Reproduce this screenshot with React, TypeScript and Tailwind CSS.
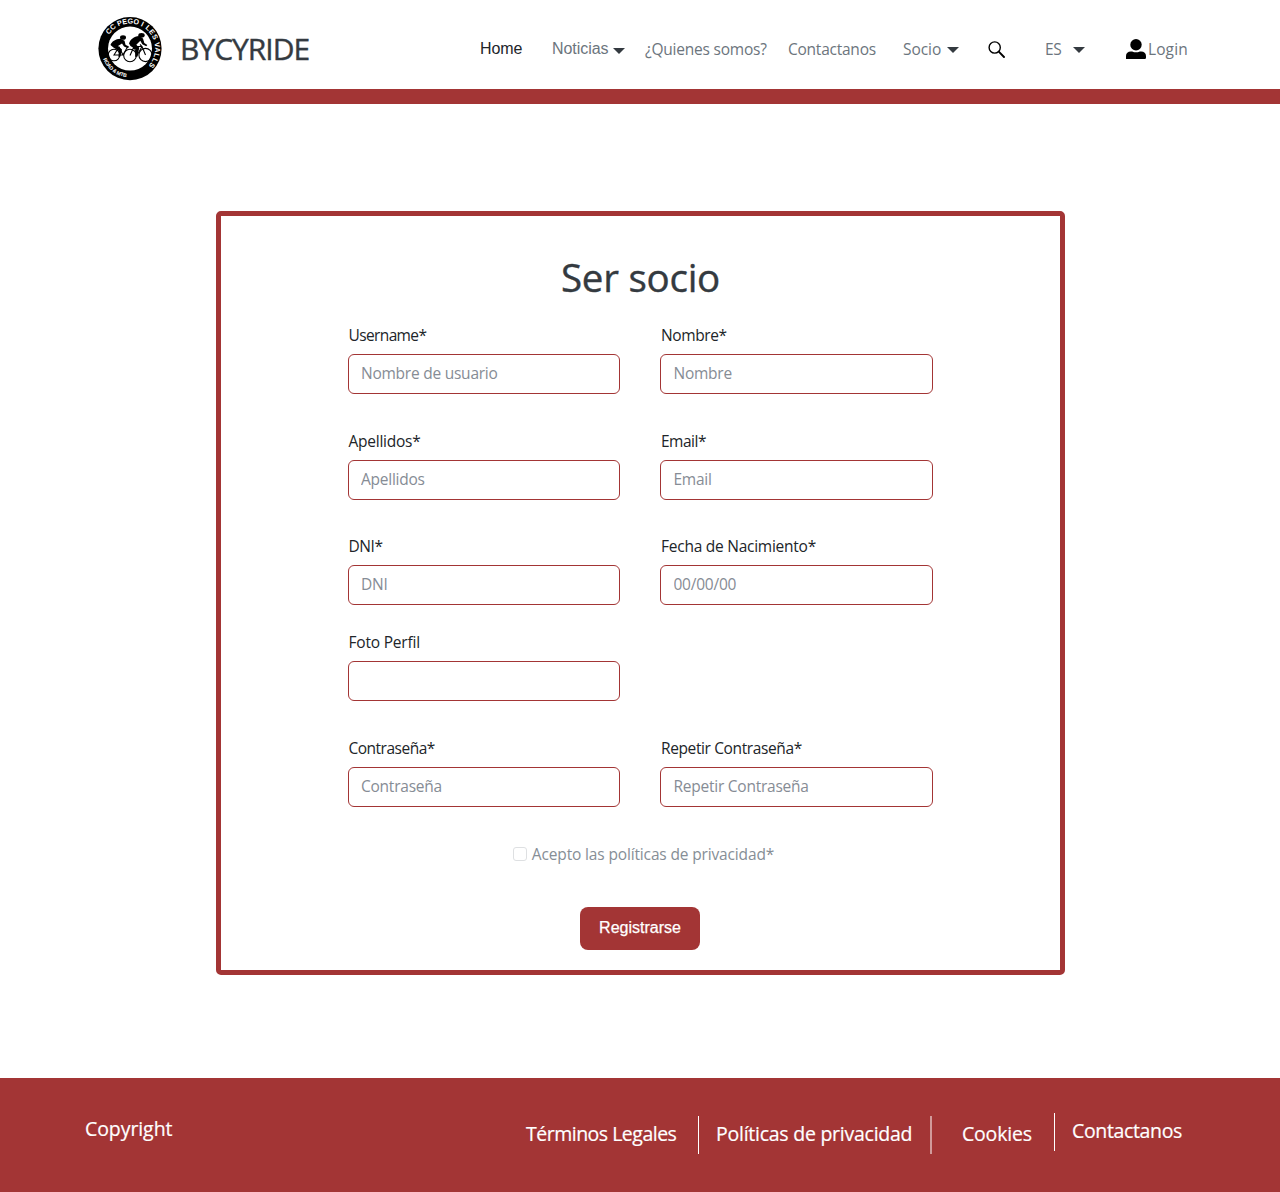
import type { ReactNode } from "react";

function Logo() {
  return (
    <svg className="h-16 w-16 shrink-0" viewBox="0 0 64 64" fill="none">
      <defs>
        <path id="ringTop" d="M 6.9 31.6 A 25.1 25.1 0 1 1 32 56.7" />
        <path id="ringBottom" d="M 3.2 31.6 A 28.8 28.8 0 0 0 60.8 31.6" />
      </defs>
      <circle cx="32" cy="31.6" r="31.6" fill="#000" />
      <circle cx="32" cy="31.6" r="22" fill="#fff" />
      <g fill="#fff" fontFamily="Liberation Sans" fontWeight="bold">
        <text fontSize="7.2">
          <textPath href="#ringTop" startOffset="14.5" textLength="37.5">CC PEGO I</textPath>
        </text>
        <text fontSize="7.2">
          <textPath href="#ringTop" startOffset="55" textLength="42">LES VALLS</textPath>
        </text>
        <text fontSize="5.2">
          <textPath href="#ringBottom" startOffset="10.5" textLength="31">ROAD &amp; MTB</textPath>
        </text>
      </g>
      <g stroke="#000" strokeWidth="1.1">
        <circle cx="16" cy="38" r="5.8" />
        <circle cx="32" cy="38.5" r="6.3" />
        <circle cx="47.5" cy="38" r="6.6" />
        <path d="M16 38l5-8 4 8zM32 38.5l4-9h8l3.5 8.5M36 29.5l3 9 5-9-2-2M25 38l5-9" />
      </g>
      <g fill="#000">
        <ellipse cx="25" cy="20.5" rx="3" ry="2.3" />
        <ellipse cx="43.5" cy="18.3" rx="3.2" ry="2.4" />
        <path d="M12.5 28c1-3.5 5-6 10-6.3l4 2 1 4 3.5 2-1 1.5-4-1.6-2-3-4 2.5 4 3.5-1.6 7-2 .4.5-6-5.5-3.5z" />
        <path d="M31 26.5c1-3.8 5-7.3 10-7.6l4 2.5 1.3 4.5 3 2-1 1.4-4-2-2-3.5-4 4 3 3-2 9h-2.2l.4-7.5-5-3.4z" />
      </g>
    </svg>
  );
}

function Caret() {
  return (
    <svg className="h-1.5 w-3 shrink-0" viewBox="0 0 12 6">
      <path d="M0 0h12L6 6z" fill="#343a40" />
    </svg>
  );
}

function NavLink({ className, children }: { className: string; children: ReactNode }) {
  return (
    <a href="#" className={`shrink-0 whitespace-nowrap leading-6 ${className}`}>
      {children}
    </a>
  );
}

function Header() {
  return (
    <header className="flex h-[104px] items-start border-b-[15px] border-[#a33535] bg-white pl-[98px]">
      <div className="flex h-[97px] w-[381px] shrink-0 items-center">
        <Logo />
        <span className="ml-[18px] text-[30px] leading-none tracking-[-1px] text-[#343a40] [-webkit-text-stroke:0.4px_#343a40]">
          BYCYRIDE
        </span>
      </div>
      <nav className="flex h-[98px] items-center text-[15.5px] text-[#6c757d]">
        <NavLink className="w-[72px] pl-px font-['Liberation_Sans',sans-serif] text-base tracking-[-0.1px] text-[#212529]">Home</NavLink>
        <NavLink className="w-[62px] pl-px font-['Liberation_Sans',sans-serif] text-base tracking-[-0.05px]">Noticias</NavLink>
        <div className="mt-1"><Caret /></div>
        <NavLink className="ml-5 w-[143px] tracking-[-0.22px]">¿Quienes somos?</NavLink>
        <NavLink className="w-[115px] tracking-[-0.24px]">Contactanos</NavLink>
        <NavLink className="w-11 tracking-[-0.05px]">Socio</NavLink>
        <div className="mt-0.5"><Caret /></div>
        <svg className="ml-[29px] h-[17px] w-[17px] shrink-0" viewBox="0 0 17 17" fill="none" stroke="#000">
          <circle cx="6.7" cy="6.5" r="5.6" strokeWidth="1.4" />
          <path d="M10.8 10.7L16 16" strokeWidth="1.9" strokeLinecap="round" />
        </svg>
        <NavLink className="ml-10 w-7 tracking-[-0.4px]">ES</NavLink>
        <div className="mt-0.5"><Caret /></div>
        <svg className="ml-[41px] h-5 w-5 shrink-0" viewBox="0 0 20 20" fill="#000">
          <circle cx="10" cy="5.7" r="5.7" />
          <path d="M0 20v-3c0-3 2-4.6 4.8-4.6h1.4a9 9 0 0 0 7.6 0h1.4c2.8 0 4.8 1.6 4.8 4.6v1.4c0 1-.7 1.6-1.6 1.6z" />
        </svg>
        <NavLink className="ml-0.5 tracking-[0.1px]">Login</NavLink>
      </nav>
    </header>
  );
}

function Field({ label, placeholder = "", type = "text", className = "", labelClass = "tracking-[-0.25px]" }: { label: string; placeholder?: string; type?: string; className?: string; labelClass?: string }) {
  return (
    <label className={`flex w-[272.5px] flex-col ${className}`}>
      <span className={`-mt-px h-[31px] pl-px leading-6 text-[#212529] ${labelClass}`}>{label}</span>
      <input
        type={type}
        placeholder={placeholder}
        className="h-10 rounded-md border border-[#a33535] bg-white px-[12.5px] pb-0.5 tracking-[-0.24px] placeholder:text-[#868c95] placeholder:opacity-100"
      />
    </label>
  );
}

function FooterDivider({ className }: { className: string }) {
  return <span className={`h-[38px] w-px shrink-0 bg-white ${className}`} />;
}

function Footer() {
  return (
    <footer className="flex h-[114px] items-start bg-[#a33535] pl-[85px] text-[19.5px] leading-7 whitespace-nowrap text-white [-webkit-text-stroke:0.2px_white]">
      <span className="mt-[37px] w-[441px] tracking-[-0.08px]">Copyright</span>
      <a href="#" className="mt-[42px] w-[172px] tracking-[-0.5px]">Términos Legales</a>
      <FooterDivider className="mt-[38px]" />
      <a href="#" className="mt-[42px] ml-[17px] w-[214px] tracking-[-0.25px]">Políticas de privacidad</a>
      <span className="mt-[38px] h-[38px] w-0.5 shrink-0 bg-[#d19a9a]" />
      <a href="#" className="mt-[42px] ml-[30px] w-[92px] tracking-[-0.2px]">Cookies</a>
      <FooterDivider className="mt-[35.4px]" />
      <a href="#" className="mt-[39px] ml-[17px] tracking-[-0.35px]">Contactanos</a>
    </footer>
  );
}

export default function App() {
  return (
    <div className="flex h-[1192px] w-[1280px] flex-col overflow-hidden bg-white font-['Open_Sans',sans-serif]">
      <Header />
      <main className="flex grow flex-col items-center pt-[107px] pl-px">
        <form className="flex h-[764px] w-[849px] flex-col items-center rounded-[5px] border-[5px] border-[#a33535] pt-[37px] text-[15.5px]">
          <h1 className="text-[38.5px] leading-12 tracking-[-0.25px] text-[#343a40] [-webkit-text-stroke:0.4px_#343a40]">Ser socio</h1>
          <div className="mt-[23px] mr-px grid w-[585px] grid-cols-2 gap-x-10">
            <Field label="Username*" placeholder="Nombre de usuario" labelClass="tracking-[-0.62px]" />
            <Field label="Nombre*" placeholder="Nombre" labelClass="tracking-[-0.4px]" />
            <Field className="mt-[35.7px]" label="Apellidos*" placeholder="Apellidos" />
            <Field className="mt-[35.7px]" label="Email*" placeholder="Email" type="email" labelClass="tracking-[-0.5px]" />
            <Field className="mt-[35.7px]" label="DNI*" placeholder="DNI" labelClass="tracking-[-0.4px]" />
            <Field className="mt-[35.7px]" label="Fecha de Nacimiento*" placeholder="00/00/00" />
            <Field className="col-span-2 mt-[26px]" label="Foto Perfil" labelClass="tracking-[-0.2px]" />
            <Field className="mt-[35.7px]" label="Contraseña*" placeholder="Contraseña" type="password" labelClass="tracking-[-0.5px]" />
            <Field className="mt-[35.7px]" label="Repetir Contraseña*" placeholder="Repetir Contraseña" type="password" labelClass="tracking-[-0.38px]" />
          </div>
          <label className="mt-[35px] ml-[6px] flex items-center gap-[5px] leading-6 tracking-[-0.15px] text-[#868e96]">
            <input type="checkbox" className="h-3.5 w-3.5 appearance-none rounded-[3px] border border-[#dee0e2] bg-white" />
            Acepto las políticas de privacidad*
          </label>
          <button
            type="button"
            className="mt-[41px] mr-px h-[43px] w-[120px] rounded-lg bg-[#a33535] pb-0.5 font-['Liberation_Sans',sans-serif] text-base text-white [-webkit-text-stroke:0.25px_white]"
          >
            Registrarse
          </button>
        </form>
      </main>
      <Footer />
    </div>
  );
}
